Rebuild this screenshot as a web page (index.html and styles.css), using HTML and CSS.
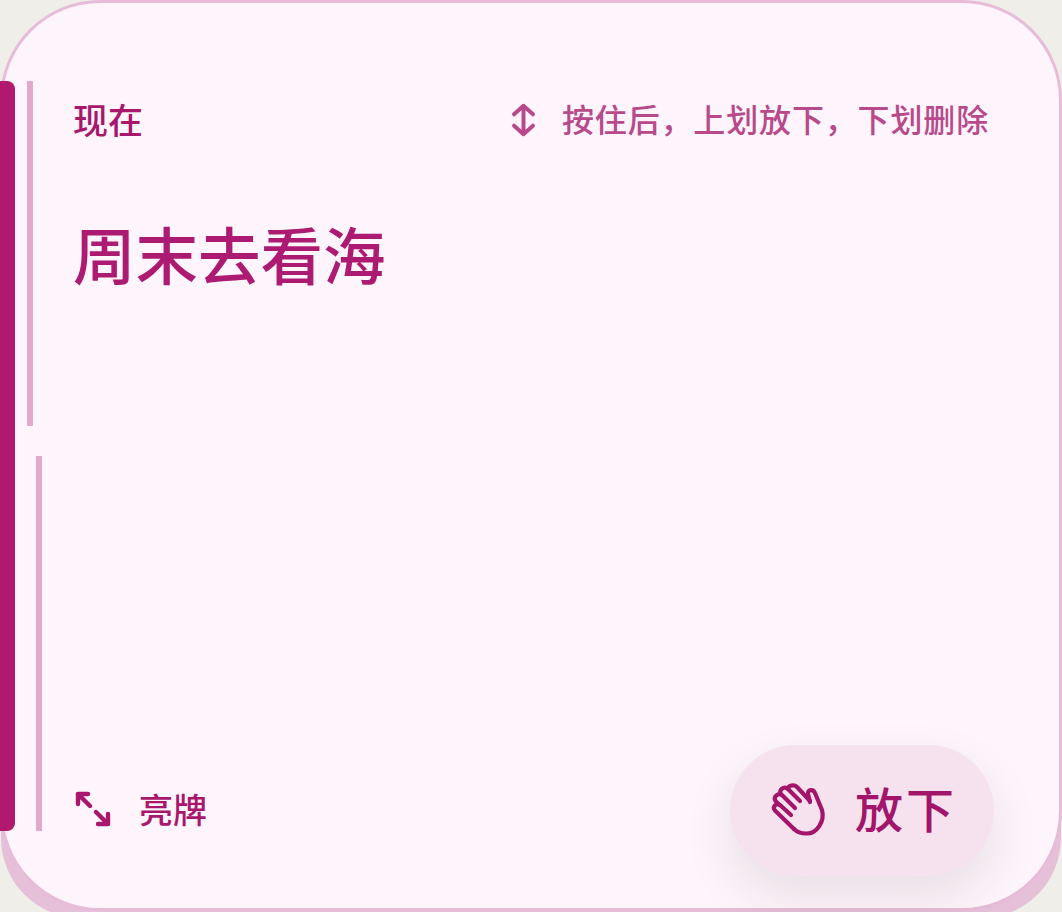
FILE: index.html
```html
<!DOCTYPE html>
<html lang="zh-CN">
<head>
    <meta charset="UTF-8">
    <meta name="viewport" content="width=device-width, initial-scale=1.0">
    <title>现在</title>
    <link rel="stylesheet" href="styles.css">
</head>
<body>
    <div class="stage">
        <div class="card-back"></div>
        <div class="card">
            <div class="bar bar-main"></div>
            <div class="bar bar-top"></div>
            <div class="bar bar-bottom"></div>

            <div class="card-header">
                <span class="now-label">现在</span>
                <div class="hint">
                    <svg class="hint-icon" viewBox="0 0 28 36" fill="none" stroke="currentColor" stroke-width="4.2" stroke-linecap="round" stroke-linejoin="round">
                        <path d="M14 3V33M4 12L14 3L24 12M4 24L14 33L24 24"/>
                    </svg>
                    <span>按住后，上划放下，下划删除</span>
                </div>
            </div>

            <h1 class="title">周末去看海</h1>

            <div class="card-footer">
                <div class="reveal">
                    <svg class="reveal-icon" viewBox="0 0 36 36" fill="none" stroke="currentColor" stroke-width="4.4" stroke-linecap="round" stroke-linejoin="round">
                        <path d="M3 13V3H13M3 3L15 15M33 23V33H23M33 33L21 21"/>
                    </svg>
                    <span>亮牌</span>
                </div>
                <button class="drop-btn">
                    <svg class="hand-icon" viewBox="0 0 70 70" fill="none" stroke="currentColor" stroke-width="4.2" stroke-linecap="round" stroke-linejoin="round">
                        <path d="M30 55L11 36.500C8 33 12 28.500 16 31L27 41"/>
                        <path d="M15 30.500L11.500 27C9 23 14 18.500 18 21L31 34"/>
                        <path d="M17 20.500C14 16 20 11.500 24 15L36 27"/>
                        <path d="M24 15C24 11.500 30 10 33 13L46 27"/>
                        <path d="M46 28L44 20C43.500 15 49.500 15 51 19L58 36C61 47 53 60 42 59.500C37 59.500 33 58 30 55"/>
                    </svg>
                    <span class="drop-text">放下</span>
                </button>
            </div>
        </div>
    </div>
</body>
</html>
```

FILE: styles.css
```css
* {
    margin: 0;
    padding: 0;
    box-sizing: border-box;
}

body {
    width: 1062px;
    height: 912px;
    overflow: hidden;
    background: #efeee9;
    font-family: "Noto Sans CJK SC", "Noto Sans", sans-serif;
}

.stage {
    position: relative;
    width: 1062px;
    height: 912px;
}

.card-back {
    position: absolute;
    left: 1px;
    right: 1px;
    top: 20px;
    bottom: -6px;
    background: #e6bfd8;
    border-radius: 80px;
}

.card {
    position: relative;
    height: 911px;
    display: flex;
    flex-direction: column;
    padding: 91px 65px 32px 73px;
    background: #fdf5fb;
    border: 3px solid #e6bcd8;
    border-radius: 100px;
}

.bar {
    position: absolute;
    background: #e3a9cd;
}

.bar-main {
    left: -3px;
    top: 78px;
    width: 15px;
    height: 750px;
    background: #b1186f;
    border-radius: 0 8px 8px 0;
}

.bar-top {
    left: 24px;
    top: 78px;
    width: 6px;
    height: 345px;
}

.bar-bottom {
    left: 33px;
    top: 453px;
    width: 6px;
    height: 375px;
}

.card-header {
    display: flex;
    align-items: center;
    justify-content: space-between;
    height: 48px;
}

.now-label {
    font-size: 35px;
    font-weight: 500;
    color: #a8176c;
    margin-left: -3px;
}

.hint {
    display: flex;
    align-items: center;
    gap: 25px;
    font-size: 32px;
    letter-spacing: 0.850px;
    font-weight: 500;
    color: #b84a8b;
    margin-right: 5px;
}

.hint-icon {
    width: 27px;
    height: 34px;
    margin-top: 4px;
}

.title {
    margin: 66px 0 0 -3px;
    font-size: 62.500px;
    line-height: 90px;
    font-weight: 500;
    color: #ad1a72;
}

.card-footer {
    margin-top: auto;
    display: flex;
    align-items: center;
    justify-content: space-between;
}

.reveal {
    display: flex;
    align-items: center;
    gap: 28px;
    font-size: 34px;
    font-weight: 500;
    color: #a8176c;
    margin-left: -1px;
    margin-bottom: 4px;
}

.reveal-icon {
    width: 36px;
    height: 36px;
}

.drop-btn {
    display: flex;
    align-items: center;
    gap: 26px;
    width: 264px;
    height: 131px;
    padding-left: 36px;
    border: none;
    border-radius: 66px;
    background: #f6e2ef;
    color: #a3156a;
    font-family: inherit;
    font-size: 48px;
    font-weight: 500;
    letter-spacing: 3px;
    box-shadow: 0 22px 50px rgba(60, 40, 50, 0.1);
}

.hand-icon {
    width: 70px;
    height: 70px;
    margin: 0 -5px 4px -2px;
}

.drop-text {
    margin-bottom: 8px;
}
```
